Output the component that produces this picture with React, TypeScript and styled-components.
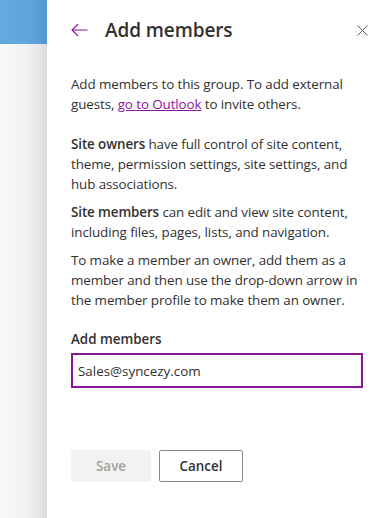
import React from "react";
import styled, { createGlobalStyle } from "styled-components";

const Global = createGlobalStyle`
  html, body {
    margin: 0;
    padding: 0;
    background: #ffffff;
  }
  body {
    font-family: "Open Sans", "Noto Sans", Arial, sans-serif;
    color: #323130;
  }
`;

const Page = styled.div`
  display: flex;
  width: 387px;
  height: 518px;
  overflow: hidden;
`;

const Backdrop = styled.div`
  width: 47px;
  display: flex;
  flex-direction: column;
`;

const Banner = styled.div`
  height: 44px;
  background: linear-gradient(90deg, #63aae1 0%, #5ea4dc 70%, #5497ce 100%);
`;

const Shade = styled.div`
  flex: 1;
  background: linear-gradient(90deg, #f9f9f9 0%, #f1f1f1 60%, #dcdcdc 100%);
`;

const Panel = styled.div`
  flex: 1;
  background: #ffffff;
  display: flex;
  flex-direction: column;
`;

const Header = styled.div`
  display: flex;
  align-items: center;
  height: 28px;
  margin-top: 16px;
  padding: 0 19px 0 24px;
`;

const IconButton = styled.button`
  border: none;
  background: transparent;
  padding: 0;
  display: flex;
  align-items: center;
  cursor: pointer;
`;

const Title = styled.h1`
  margin: 0 0 0 17px;
  font-size: 19px;
  font-weight: 600;
  line-height: 28px;
  letter-spacing: -0.1px;
  flex: 1;
  color: #323130;
`;

const Body = styled.div`
  padding: 0 24px;
  margin-top: 30px;
`;

const Para = styled.p<{ $gap: number }>`
  margin: ${(p) => p.$gap}px 0 0;
  font-size: 13.4px;
  line-height: 20px;
  letter-spacing: -0.1px;
  color: #323130;
`;

const Strong = styled.span`
  font-weight: 600;
`;

const Link = styled.a`
  color: #881798;
  text-decoration: underline;
`;

const Label = styled.label`
  display: block;
  margin-top: 19px;
  font-size: 13.4px;
  font-weight: 600;
  line-height: 20px;
`;

const Input = styled.input`
  display: block;
  box-sizing: border-box;
  width: 292px;
  height: 35px;
  margin-top: 4px;
  border: 2px solid #881798;
  border-radius: 0;
  padding: 0 5px;
  font-family: inherit;
  font-size: 13.4px;
  color: #323130;
  outline: none;
`;

const Actions = styled.div`
  display: flex;
  gap: 8px;
  margin-top: 62px;
`;

const Button = styled.button<{ $primary?: boolean }>`
  box-sizing: border-box;
  height: 32px;
  border-radius: 2px;
  font-family: inherit;
  font-size: 13.4px;
  font-weight: 600;
  padding: 0 16px;
  border: 1px solid ${(p) => (p.$primary ? "#f3f2f1" : "#8a8886")};
  background: ${(p) => (p.$primary ? "#f3f2f1" : "#ffffff")};
  color: ${(p) => (p.$primary ? "#a19f9d" : "#323130")};
`;

const BackArrow = () => (
  <svg width="17" height="14" viewBox="0 0 17 14" fill="none">
    <path d="M16.5 7H1M7 1L1 7l6 6" stroke="#881798" strokeWidth="1.1" />
  </svg>
);

const CloseIcon = () => (
  <svg width="11" height="11" viewBox="0 0 11 11" fill="none">
    <path d="M0.5 0.5l10 10M10.5 0.5l-10 10" stroke="#605e5c" strokeWidth="1" />
  </svg>
);

export default function App() {
  return (
    <Page>
      <Global />
      <Backdrop>
        <Banner />
        <Shade />
      </Backdrop>
      <Panel>
        <Header>
          <IconButton aria-label="Back">
            <BackArrow />
          </IconButton>
          <Title>Add members</Title>
          <IconButton aria-label="Close">
            <CloseIcon />
          </IconButton>
        </Header>
        <Body>
          <Para $gap={0}>
            Add members to this group. To add external guests,{" "}
            <Link href="#">go to Outlook</Link> to invite others.
          </Para>
          <Para $gap={20}>
            <Strong>Site owners</Strong> have full control of site content,
            theme, permission settings, site settings, and hub associations.
          </Para>
          <Para $gap={8}>
            <Strong>Site members</Strong> can edit and view site content,
            including files, pages, lists, and navigation.
          </Para>
          <Para $gap={8}>
            To make a member an owner, add them as a member and then use the
            drop-down arrow in the member profile to make them an owner.
          </Para>
          <Label>Add members</Label>
          <Input defaultValue="Sales@syncezy.com" />
          <Actions>
            <Button $primary style={{ width: 80 }}>Save</Button>
            <Button style={{ width: 84 }}>Cancel</Button>
          </Actions>
        </Body>
      </Panel>
    </Page>
  );
}
